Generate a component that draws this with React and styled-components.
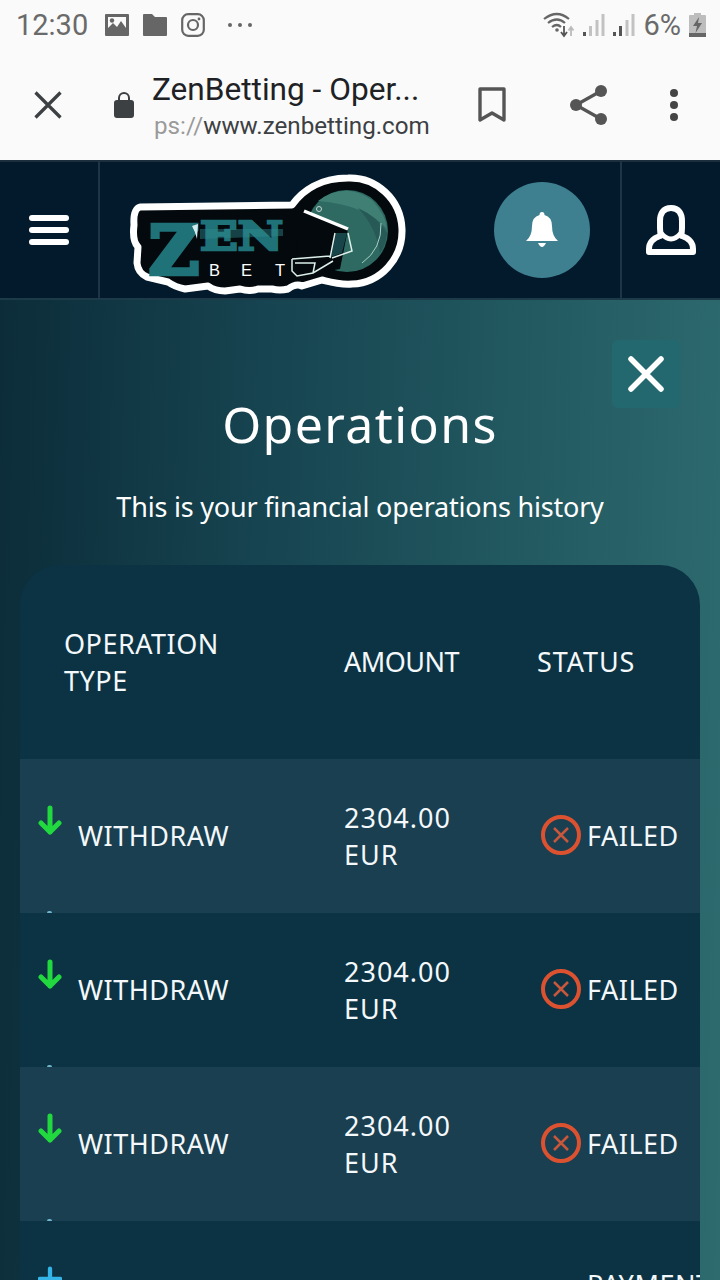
import React from "react";
import styled, { createGlobalStyle } from "styled-components";

const GlobalStyle = createGlobalStyle`
  html, body {
    margin: 0;
    padding: 0;
    background: #0b2a36;
  }
  * {
    box-sizing: border-box;
  }
`;

const rows = [
  { type: "WITHDRAW", amount: "2304.00", currency: "EUR", status: "FAILED" },
  { type: "WITHDRAW", amount: "2304.00", currency: "EUR", status: "FAILED" },
  { type: "WITHDRAW", amount: "2304.00", currency: "EUR", status: "FAILED" },
];

function Logo() {
  return (
    <LogoSvg viewBox="125 165 285 132">
      <path
        d="M140 206 L292 204 C302 190 320 177 348 177 A52 53 0 0 1 352 283 C340 284 330 281 322 279 L302 285 Q296 282 288 288 Q280 290 272 288 L258 288 Q250 291 240 288 L225 290 Q215 290 208 285 L185 288 Q175 286 168 281 L147 276 Q138 272 137 262 L138 246 Q132 240 134 224 Q133 208 140 206 Z"
        fill="#03090d"
        stroke="#ffffff"
        strokeWidth="7"
        strokeLinejoin="round"
      />
      <circle cx="347" cy="230" r="41" fill="#2e6a62" />
      <path d="M318 200 Q345 180 372 199 Q386 214 387 228 Q366 204 318 200 Z" fill="#3f7f74" />
      <path d="M358 207 Q378 216 387 232 Q386 244 380 252 Q376 226 358 207 Z" fill="#275a56" />
      <path d="M304 209 L348 228 L340 268 L300 275 L296 240 Z" fill="#03090d" />
      <path d="M336 232 L331 256 L342 252 L347 232 Z" fill="#17454a" />
      <path d="M381 222 Q382 248 362 262" fill="none" stroke="#a7cfc6" strokeWidth="1" />
      <path d="M304 210 L348 228" stroke="#ffffff" strokeWidth="3.5" />
      <circle cx="319" cy="208" r="2.5" fill="none" stroke="#c9d6d2" strokeWidth="1" />
      <path
        d="M335 232 L330 257 M348 232 L352 250 L332 257 M292 258 L330 255 M292 258 L292 270 L297 275 L313 272 L333 260 M295 262 L315 262 L313 272"
        fill="none"
        stroke="#dcefe9"
        strokeWidth="1.5"
      />
      <LogoLetters x="200" y="249" fontSize="39" textLength="83" lengthAdjust="spacingAndGlyphs" $weight={2.5}>
        EN
      </LogoLetters>
      <LogoLetters x="149" y="273" fontSize="68" textLength="50" lengthAdjust="spacingAndGlyphs" $weight={4.5}>
        Z
      </LogoLetters>
      <path d="M192 225 L198 223 L197 238 Q195 230 192 225 Z" fill="#d5ecee" />
      <path d="M200 228 H283 V235 L200 238 Z" fill="#2f8a8e" opacity="0.45" />
      <LogoSmall x="209" y="275">
        B
      </LogoSmall>
      <LogoSmall x="241" y="275">
        E
      </LogoSmall>
      <LogoSmall x="275" y="275">
        T
      </LogoSmall>
    </LogoSvg>
  );
}

function SignalBars({ dark }) {
  const bars = [
    { x: 0, h: 4 },
    { x: 6, h: 10 },
    { x: 12.5, h: 16 },
    { x: 18.5, h: 22 },
  ];
  return (
    <svg width="22" height="22" viewBox="0 0 22 22">
      {bars.map((b, i) => (
        <rect key={i} x={b.x} y={22 - b.h} width="3" height={b.h} fill={i < dark ? "#555" : "#c2c2c2"} />
      ))}
    </svg>
  );
}

function FailedIcon() {
  return (
    <svg width="40" height="40" viewBox="0 0 40 40">
      <circle cx="20" cy="20" r="18" fill="none" stroke="#dc5230" strokeWidth="4" />
      <path d="M13 13 L27 27 M27 13 L13 27" stroke="#c9573c" strokeWidth="2.5" />
    </svg>
  );
}

function ArrowDown() {
  return (
    <svg width="24" height="32" viewBox="0 0 24 32">
      <path
        d="M12 3 L12 27 M3 18 L12 27 L21 18"
        fill="none"
        stroke="#22d83f"
        strokeWidth="5"
        strokeLinecap="round"
        strokeLinejoin="round"
      />
    </svg>
  );
}

function PlusIcon() {
  return (
    <svg width="28" height="28" viewBox="0 0 28 28">
      <path d="M14 2 L14 26 M2 14 L26 14" stroke="#35b4e8" strokeWidth="5" strokeLinecap="round" />
    </svg>
  );
}

export default function App() {
  return (
    <Screen>
      <GlobalStyle />
      <StatusBar>
        <StatusGroup>
          <Clock>12:30</Clock>
          <svg width="24" height="22" viewBox="0 0 24 22">
            <path
              fillRule="evenodd"
              d="M1 0 H23 Q24 0 24 1 V21 Q24 22 23 22 H1 Q0 22 0 21 V1 Q0 0 1 0 Z M3 3 V14 L8 9 L12 13 L16 7 L21 14 V3 Z"
              fill="#666"
            />
            <circle cx="7" cy="6.5" r="2.2" fill="#666" />
          </svg>
          <svg width="24" height="22" viewBox="0 0 24 22">
            <path d="M1 0 H9 L12 3 H23 Q24 3 24 4 V21 Q24 22 23 22 H1 Q0 22 0 21 V1 Q0 0 1 0 Z" fill="#666" />
          </svg>
          <svg width="24" height="24" viewBox="0 0 24 24">
            <rect x="1.2" y="1.2" width="21.6" height="21.6" rx="6" fill="none" stroke="#666" strokeWidth="2.2" />
            <circle cx="12" cy="12" r="5" fill="none" stroke="#666" strokeWidth="2.2" />
            <circle cx="18" cy="6" r="1.4" fill="#666" />
          </svg>
          <MoreDots>
            <i />
            <i />
            <i />
          </MoreDots>
        </StatusGroup>
        <StatusGroup $right>
          <svg width="32" height="26" viewBox="0 0 32 26">
            <path d="M1 7 Q14 -3 26 7" fill="none" stroke="#666" strokeWidth="2.2" />
            <path d="M5 11 Q14 4 22 11" fill="none" stroke="#666" strokeWidth="2.2" />
            <path d="M9 15 Q14 11 18 15" fill="none" stroke="#666" strokeWidth="2.2" />
            <circle cx="14" cy="18" r="1.8" fill="#666" />
            <path d="M21 14 V23 M18 20 L21 24 L24 20" fill="none" stroke="#555" strokeWidth="1.8" />
            <path d="M28 24 V16 M25.5 18.5 L28 15 L30.5 18.5" fill="none" stroke="#bbb" strokeWidth="1.8" />
          </svg>
          <SignalBars dark={1} />
          <SignalBars dark={2} />
          <Percent>6%</Percent>
          <svg width="17" height="24" viewBox="0 0 17 24">
            <rect x="5" y="0" width="7" height="3" fill="#bdbdbd" />
            <rect x="0" y="2" width="17" height="22" rx="1" fill="#bdbdbd" />
            <rect x="0" y="20" width="17" height="4" fill="#666" />
            <path d="M10 4 L4 13 H8 L6.5 20 L13 10 H9 Z" fill="#666" />
          </svg>
        </StatusGroup>
      </StatusBar>

      <BrowserBar>
        <BrowserClose>
          <svg width="28" height="28" viewBox="0 0 28 28">
            <path d="M1.5 1.5 L26.5 26.5 M26.5 1.5 L1.5 26.5" stroke="#3c4043" strokeWidth="3.2" />
          </svg>
        </BrowserClose>
        <LockIcon>
          <svg width="20" height="26" viewBox="0 0 20 26">
            <path d="M5 9 V6 A5 5 0 0 1 15 6 V9" fill="none" stroke="#3c4043" strokeWidth="2" />
            <rect x="0" y="8" width="20" height="18" rx="3" fill="#3c4043" />
          </svg>
        </LockIcon>
        <Address>
          <PageTitle>ZenBetting - Oper...</PageTitle>
          <PageUrl>
            <span>ps://</span>www.zenbetting.com
          </PageUrl>
        </Address>
        <BrowserActions>
          <svg width="28" height="36" viewBox="0 0 28 36">
            <path d="M2 2 H26 V33 L14 26 L2 33 Z" fill="none" stroke="#555" strokeWidth="3.4" strokeLinejoin="round" />
          </svg>
          <svg width="38" height="40" viewBox="0 0 38 40">
            <path d="M6 20 L31 6 M6 20 L31 34" stroke="#555" strokeWidth="3.2" />
            <circle cx="6" cy="20" r="6" fill="#555" />
            <circle cx="31" cy="6" r="6" fill="#555" />
            <circle cx="31" cy="34" r="6" fill="#555" />
          </svg>
          <svg width="8" height="32" viewBox="0 0 8 32">
            <circle cx="4" cy="4" r="4" fill="#444" />
            <circle cx="4" cy="16" r="4" fill="#444" />
            <circle cx="4" cy="28" r="4" fill="#444" />
          </svg>
        </BrowserActions>
      </BrowserBar>

      <SiteHeader>
        <Burger>
          <i />
          <i />
          <i />
        </Burger>
        <LogoCell>
          <Logo />
          <BellButton>
            <svg width="32" height="36" viewBox="0 0 32 36">
              <path
                d="M16 0 Q18.5 0 18.5 3 Q26 5 26 14 Q26 24 32 29 H0 Q6 24 6 14 Q6 5 13.5 3 Q13.5 0 16 0 Z"
                fill="#fff"
              />
              <path d="M12 31 H20 Q18 35 16 35 Q14 35 12 31 Z" fill="#fff" />
            </svg>
          </BellButton>
        </LogoCell>
        <UserCell>
          <svg width="50" height="50" viewBox="0 0 50 50">
            <path
              d="M25 3 C17 3 14 9 14 16 L14 22 C14 27 15 31 14 31 C8 33 3 37 3 44 V47 H47 V44 C47 37 42 33 36 31 C35 31 36 27 36 22 L36 16 C36 9 33 3 25 3 Z"
              fill="none"
              stroke="#fff"
              strokeWidth="6"
              strokeLinejoin="round"
            />
            <path d="M15 28 Q25 40 35 28" fill="none" stroke="#fff" strokeWidth="5" />
          </svg>
        </UserCell>
      </SiteHeader>

      <Panel>
        <CloseButton>
          <svg width="36" height="36" viewBox="0 0 36 36">
            <path d="M3 3 L33 33 M33 3 L3 33" stroke="#fff" strokeWidth="5.5" strokeLinecap="round" />
          </svg>
        </CloseButton>
        <Title>Operations</Title>
        <Subtitle>This is your financial operations history</Subtitle>
        <Table>
          <HeadRow>
            <HeadType>OPERATION TYPE</HeadType>
            <HeadAmount>AMOUNT</HeadAmount>
            <HeadStatus>STATUS</HeadStatus>
          </HeadRow>
          {rows.map((row, i) => (
            <Row key={i} $light={i % 2 === 0} $tick>
              <TypeCell>
                <IconSlot>
                  <ArrowDown />
                </IconSlot>
                {row.type}
              </TypeCell>
              <AmountCell>
                {row.amount}
                <br />
                {row.currency}
              </AmountCell>
              <StatusCell>
                <FailedIcon />
                {row.status}
              </StatusCell>
            </Row>
          ))}
          <Row>
            <TypeCell>
              <PlusSlot>
                <PlusIcon />
              </PlusSlot>
            </TypeCell>
            <AmountCell />
            <StatusCell>
              <PaymentText>PAYMENT</PaymentText>
            </StatusCell>
          </Row>
        </Table>
      </Panel>
    </Screen>
  );
}

const Screen = styled.div`
  width: 720px;
  height: 1280px;
  overflow: hidden;
  display: flex;
  flex-direction: column;
  font-family: "Noto Sans", sans-serif;
`;
const StatusBar = styled.div`
  height: 50px;
  background: #fafafa;
  display: flex;
  align-items: center;
  justify-content: space-between;
  padding: 0 14px 0 16px;
`;
const StatusGroup = styled.div`
  display: flex;
  align-items: center;
  gap: ${(p) => (p.$right ? "8px" : "14px")};
`;
const Clock = styled.span`
  font-family: Roboto, sans-serif;
  font-size: 29px;
  color: #6a6a6a;
  margin-right: 3px;
`;
const MoreDots = styled.span`
  display: flex;
  gap: 6px;
  margin-left: 9px;
  i {
    width: 4px;
    height: 4px;
    border-radius: 50%;
    background: #666;
  }
`;
const Percent = styled.span`
  font-family: Roboto, sans-serif;
  font-size: 29px;
  color: #6a6a6a;
`;
const BrowserBar = styled.div`
  height: 110px;
  background: #fafafa;
  display: flex;
  align-items: center;
  padding-left: 34px;
`;
const BrowserClose = styled.div`
  display: flex;
  margin-right: 52px;
`;
const LockIcon = styled.div`
  display: flex;
  margin-right: 18px;
`;
const Address = styled.div`
  width: 300px;
  padding-top: 4px;
  display: flex;
  flex-direction: column;
  font-family: Roboto, sans-serif;
`;
const PageTitle = styled.div`
  font-size: 31.6px;
  line-height: 38px;
  color: #202124;
`;
const PageUrl = styled.div`
  font-size: 24.2px;
  line-height: 34px;
  margin-left: 2px;
  color: #3c4043;
  white-space: nowrap;
  span {
    color: #9a9a9a;
  }
`;
const BrowserActions = styled.div`
  display: flex;
  align-items: center;
  margin-left: 26px;
  gap: 62px;
  svg:nth-child(2) {
    margin-left: 2px;
  }
`;
const SiteHeader = styled.header`
  height: 140px;
  display: flex;
  background: #021a2c;
  border-top: 2px solid #1c2f3e;
  border-bottom: 2px solid #1d3a48;
`;
const Burger = styled.div`
  width: 100px;
  border-right: 2px solid #1f3546;
  display: flex;
  flex-direction: column;
  align-items: flex-start;
  justify-content: center;
  gap: 6px;
  padding-left: 29px;
  i {
    width: 40px;
    height: 6px;
    border-radius: 3px;
    background: #fff;
  }
`;
const LogoCell = styled.div`
  flex: 1;
  display: flex;
  align-items: center;
  justify-content: space-between;
  padding: 0 30px 0 25px;
`;
const LogoSvg = styled.svg`
  width: 285px;
  height: 132px;
  margin-top: 4px;
`;
const LogoLetters = styled.text`
  font-family: "DejaVu Serif", serif;
  font-weight: 700;
  fill: #1f7378;
  stroke: #1f7378;
  stroke-width: ${(p) => p.$weight}px;
  stroke-linejoin: miter;
`;
const LogoSmall = styled.text`
  font-family: "Liberation Sans", sans-serif;
  font-size: 16.5px;
  fill: #fff;
`;
const BellButton = styled.div`
  width: 96px;
  height: 96px;
  border-radius: 50%;
  background: #3e7f90;
  display: flex;
  align-items: center;
  justify-content: center;
`;
const UserCell = styled.div`
  width: 100px;
  border-left: 2px solid #1f3546;
  display: flex;
  align-items: center;
  justify-content: center;
`;
const Panel = styled.main`
  position: relative;
  flex: 1;
  min-height: 0;
  padding: 94px 20px 0;
  color: #fff;
  background: linear-gradient(92deg, #0c2c39 0%, #164450 35%, #2d6b6f 100%);
`;
const CloseButton = styled.div`
  position: absolute;
  top: 40px;
  right: 40px;
  width: 68px;
  height: 68px;
  border-radius: 6px;
  background: #23686f;
  display: flex;
  align-items: center;
  justify-content: center;
`;
const Title = styled.h1`
  margin: 0;
  font-size: 50px;
  line-height: 60px;
  font-weight: 400;
  letter-spacing: 1.4px;
  text-align: center;
`;
const Subtitle = styled.p`
  margin: 33px 0 0;
  font-size: 27px;
  line-height: 40px;
  letter-spacing: -0.2px;
  text-align: center;
`;
const Table = styled.section`
  margin-top: 38px;
  border-radius: 40px 40px 0 0;
  overflow: hidden;
  background: #0b3344;
  font-size: 27px;
  line-height: 37px;
  letter-spacing: 0.5px;
  color: #f4f8fa;
`;
const HeadRow = styled.div`
  height: 194px;
  display: grid;
  grid-template-columns: 324px 193px 1fr;
  align-items: center;
`;
const HeadType = styled.div`
  padding-left: 44px;
  width: 240px;
`;
const HeadAmount = styled.div`
  letter-spacing: -0.5px;
  margin-bottom: 2px;
`;
const HeadStatus = styled.div`
  letter-spacing: 0.9px;
  margin-bottom: 2px;
`;
const Row = styled.div`
  position: relative;
  height: 154px;
  display: grid;
  grid-template-columns: 324px 193px 1fr;
  align-items: center;
  background: ${(p) => (p.$light ? "#193f50" : "#0b3344")};
  ${(p) =>
    p.$tick &&
    `&::after {
      content: "";
      position: absolute;
      left: 27px;
      bottom: 0;
      width: 5px;
      height: 2px;
      border-radius: 2px 2px 0 0;
      background: #6fb6cc;
    }`}
`;
const TypeCell = styled.div`
  display: flex;
  align-items: center;
  padding: 0 0 2px 18px;
`;
const IconSlot = styled.span`
  width: 24px;
  margin-right: 16px;
  display: flex;
  justify-content: center;
  margin-bottom: 28px;
`;
const PlusSlot = styled.span`
  width: 24px;
  display: flex;
  justify-content: center;
  margin-bottom: 36px;
`;
const AmountCell = styled.div`
  letter-spacing: 1px;
`;
const StatusCell = styled.div`
  display: flex;
  align-items: center;
  gap: 6px;
  padding: 0 0 2px 4px;
  white-space: nowrap;
`;
const PaymentText = styled.div`
  margin: 0 0 26px 46px;
`;
